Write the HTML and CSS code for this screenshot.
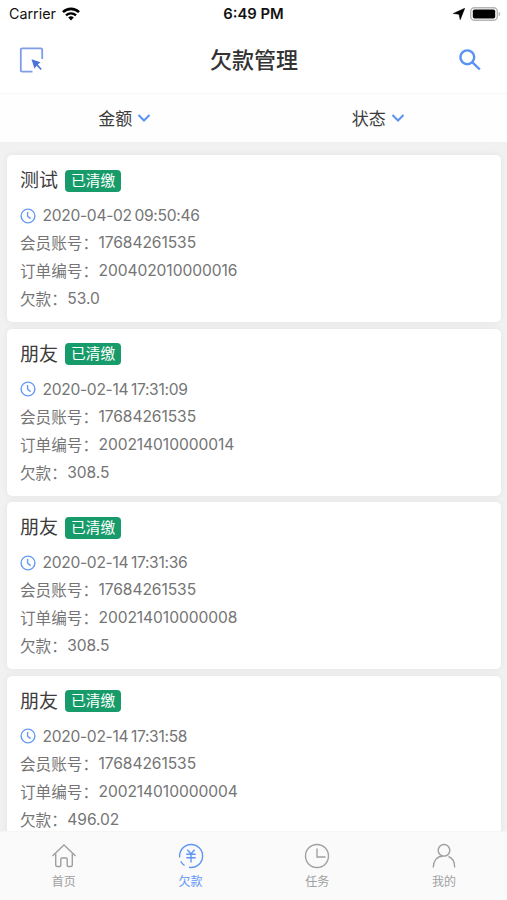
FILE: index.html
```html
<!DOCTYPE html>
<html lang="zh-CN">
<head>
    <meta charset="UTF-8">
    <meta name="viewport" content="width=device-width, initial-scale=1.0">
    <title>欠款管理</title>
    <link rel="stylesheet" href="styles.css">
</head>
<body>
    <svg width="0" height="0" class="sprite">
        <symbol id="clock" viewBox="0 0 16 16">
            <circle cx="8" cy="8" r="6.9"/>
            <path d="M7.6 4v4.2l3 2.4"/>
        </symbol>
        <symbol id="chevron" viewBox="0 0 14 10">
            <path d="M1.5 2l5.5 5.5L12.5 2"/>
        </symbol>
    </svg>

    <div class="status-bar">
        <div class="carrier">
            <span>Carrier</span>
            <svg width="18" height="14" viewBox="0 0 18 14">
                <path d="M1 5.1a11.5 11.5 0 0 1 16 0" fill="none" stroke="#000" stroke-width="2.6"/>
                <path d="M4 8.3a7.2 7.2 0 0 1 10 0" fill="none" stroke="#000" stroke-width="2.3"/>
                <path d="M6.2 10.6a4 4 0 0 1 5.6 0L9 13.4z"/>
            </svg>
        </div>
        <div class="time">6:49 PM</div>
        <div class="indicators">
            <svg width="12" height="12" viewBox="0 0 12 12"><path d="M11.8.2L7.2 11.8 6 6.300.2 5.500z" stroke="#000" stroke-width=".5"/></svg>
            <svg width="31" height="14" viewBox="0 0 31 14">
                <rect x=".7" y=".7" width="26.6" height="12.6" rx="3.8" fill="#fff" stroke="#b5b5b5" stroke-width="1.4"/>
                <rect x="2.8" y="2.5" width="22.4" height="9" rx="1.8"/>
                <path d="M28.7 4.7c2 .8 2 3.8 0 4.6z" fill="#b5b5b5"/>
            </svg>
        </div>
    </div>

    <header class="navbar">
        <svg class="select-icon" width="25" height="26" viewBox="0 0 25 26">
            <path d="M13.5 24.7H3a1.2 1.2 0 0 1-1.2-1.2v-21A1.2 1.2 0 0 1 3 1.3h19a1.2 1.2 0 0 1 1.2 1.2V12" fill="none" stroke="#809be8" stroke-width="1.8"/>
            <path d="M12.5 12.300l9 3-2.700 2.200 4 4.600-1 .9-4.300-4.300-2 3z" fill="#4c73d9"/>
        </svg>
        <h1>欠款管理</h1>
        <svg class="search-icon" width="22" height="22" viewBox="0 0 22 22">
            <circle cx="8.3" cy="8.3" r="6.9"/>
            <path d="M13.2 13.2l7.6 7.3"/>
        </svg>
    </header>

    <div class="filters">
        <div class="filter">金额<svg><use href="#chevron"/></svg></div>
        <div class="filter">状态<svg><use href="#chevron"/></svg></div>
    </div>

    <main class="list">
        <section class="card">
            <h2>测试<span class="badge">已清缴</span></h2>
            <p class="date"><svg><use href="#clock"/></svg><span class="date-text">2020-04-02 09:50:46</span></p>
            <p>会员账号：<span class="num">17684261535</span></p>
            <p>订单编号：<span class="num">200402010000016</span></p>
            <p>欠款：<span class="num">53.0</span></p>
        </section>
        <section class="card">
            <h2>朋友<span class="badge">已清缴</span></h2>
            <p class="date"><svg><use href="#clock"/></svg><span class="date-text">2020-02-14 17:31:09</span></p>
            <p>会员账号：<span class="num">17684261535</span></p>
            <p>订单编号：<span class="num">200214010000014</span></p>
            <p>欠款：<span class="num">308.5</span></p>
        </section>
        <section class="card">
            <h2>朋友<span class="badge">已清缴</span></h2>
            <p class="date"><svg><use href="#clock"/></svg><span class="date-text">2020-02-14 17:31:36</span></p>
            <p>会员账号：<span class="num">17684261535</span></p>
            <p>订单编号：<span class="num">200214010000008</span></p>
            <p>欠款：<span class="num">308.5</span></p>
        </section>
        <section class="card">
            <h2>朋友<span class="badge">已清缴</span></h2>
            <p class="date"><svg><use href="#clock"/></svg><span class="date-text">2020-02-14 17:31:58</span></p>
            <p>会员账号：<span class="num">17684261535</span></p>
            <p>订单编号：<span class="num">200214010000004</span></p>
            <p>欠款：<span class="num">496.02</span></p>
        </section>
    </main>

    <nav class="tabbar">
        <a class="tab">
            <svg viewBox="0 0 26 26"><path d="M1.5 13L13 2l11.5 11M4.7 10.5V22a1.5 1.5 0 0 0 1.5 1.5h2.6a1 1 0 0 0 1-1V16a1 1 0 0 1 1-1h4.4a1 1 0 0 1 1 1v6.5a1 1 0 0 0 1 1h2.6a1.5 1.5 0 0 0 1.5-1.5V10.5"/></svg>
            首页
        </a>
        <a class="tab active">
            <svg viewBox="0 0 26 26">
                <path d="M1.7 14.5A11.5 11.5 0 1 1 11 24.3M2.7 18.200a11.5 11.5 0 0 0 3.8 4.300"/>
                <path d="M9.300 6.800l3.700 4 3.700-4M8.300 11.300h9.400M8.300 14.800h9.400M13 11v8.500"/>
            </svg>
            欠款
        </a>
        <a class="tab">
            <svg viewBox="0 0 26 26"><circle cx="13" cy="13" r="11.5"/><path d="M13 5.5V14h8.5"/></svg>
            任务
        </a>
        <a class="tab">
            <svg viewBox="0 0 26 26"><circle cx="13" cy="7.3" r="5.8"/><path d="M2.3 24.5c0-6.5 3.500-11.300 9.500-11.300M17.5 13.500c4 1.500 6.200 6 6.200 11"/></svg>
            我的
        </a>
    </nav>
</body>
</html>
```
FILE: styles.css
```css
* {
    box-sizing: border-box;
}

body {
    display: flex;
    flex-direction: column;
    height: 900px;
    margin: 0;
    overflow: hidden;
    background: #fff;
    color: #3c3c3c;
    font-family: Inter, "Noto Sans CJK SC", sans-serif;
}

h1, h2, p {
    margin: 0;
    font-weight: 400;
}

svg {
    display: block;
    flex: none;
}

.sprite {
    display: none;
}

.status-bar {
    display: grid;
    grid-template-columns: 1fr auto 1fr;
    align-items: center;
    flex: none;
    height: 27px;
    padding: 0 6px 0 9px;
    color: #111;
    font-size: 14.3px;
}

.carrier, .indicators {
    display: flex;
    align-items: center;
    gap: 6px;
}

.indicators {
    justify-content: flex-end;
    gap: 5px;
}

.time {
    padding-right: 3px;
    font-size: 14.8px;
    font-weight: 600;
}

.navbar {
    display: grid;
    grid-template-columns: 1fr auto 1fr;
    align-items: center;
    flex: none;
    height: 67px;
    padding: 0 26px 0 19px;
    border-bottom: 1px solid #f7f7f7;
}

.navbar h1 {
    padding-left: 8px;
    color: #333;
    font-size: 22px;
    font-weight: 500;
    line-height: 30px;
}

.search-icon {
    justify-self: end;
    fill: none;
    stroke: #5a91f5;
    stroke-width: 2.4;
}

.filters {
    display: flex;
    flex: none;
    height: 48px;
    background: #fefefe;
}

.filter {
    display: flex;
    flex: 1;
    justify-content: center;
    align-items: center;
    gap: 5px;
    padding: 0 4px 1px 0;
    font-size: 17px;
}

.filter svg {
    width: 14px;
    height: 10px;
    fill: none;
    stroke: #5a91f5;
    stroke-width: 2;
}

.list {
    flex: 1;
    min-height: 0;
    overflow: hidden;
    padding: 13px 6px 0 7px;
    background: #f1f1f1;
}

.card {
    height: 167px;
    margin-bottom: 6.5px;
    padding: 12px 13px 0;
    background: #fff;
    border-radius: 5px;
    box-shadow: 0 0 6px rgba(0, 0, 0, 0.06);
}

.card h2 {
    display: flex;
    align-items: center;
    height: 28px;
    margin-bottom: 7px;
    font-size: 19px;
    line-height: 26px;
}

.badge {
    height: 22px;
    margin: -1px 0 0 7px;
    padding: 0 6px;
    border-radius: 4px;
    background: #189b6a;
    color: #fff;
    font-size: 14.7px;
    line-height: 22px;
}

.card p {
    display: flex;
    height: 28px;
    color: #757575;
    font-size: 15.6px;
    line-height: 29px;
}

.num {
    padding-left: 0.5px;
    letter-spacing: -0.08px;
    line-height: 28px;
}

.card .date {
    align-items: center;
    height: 27px;
    gap: 6.5px;
}

.date-text {
    letter-spacing: -0.3px;
    word-spacing: -1.5px;
}

.date svg {
    width: 16px;
    height: 16px;
    fill: none;
    stroke: #659af5;
    stroke-width: 1.4;
}

.tabbar {
    display: flex;
    flex: none;
    height: 69px;
    background: #fafafa;
    border-top: 1px solid #f5f5f5;
}

.tab {
    display: flex;
    flex: 1;
    flex-direction: column;
    align-items: center;
    padding: 11px 0 0 1px;
    color: #a0a0a0;
    font-size: 12px;
    line-height: 21px;
}

.tab svg {
    width: 26px;
    height: 26px;
    margin-bottom: 2px;
    fill: none;
    stroke: currentColor;
    stroke-width: 1.4;
}

.tab.active {
    color: #5f96f5;
}
```
